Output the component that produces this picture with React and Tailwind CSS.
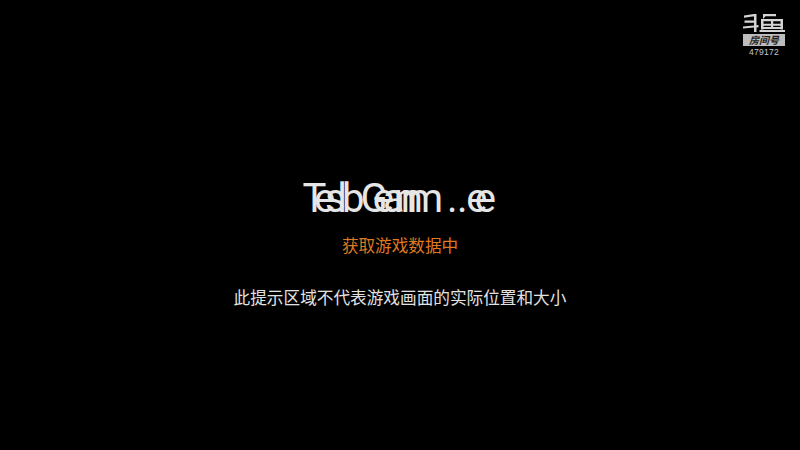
const cjk = { fontFamily: '"Noto Sans CJK SC", sans-serif' }

function Logo() {
  return (
    <div className="flex w-[42px] flex-col items-center">
      <svg viewBox="0 0 42 18" className="h-[18px] w-[42px]" fill="#d4d4d4">
        {/* dou */}
        <path d="M1 1.500 11 0v2.200L1 3.700zM1.500 6.500h9.500v2.200H1.500zM0 12.500l11-1V0h2.500v11.200l2-.2v2.200l-2 .2V18H11v-4.600L0 14.500z" />
        {/* yu */}
        <path d="M20 0h13v2.200H22.500L20 5zM18 5h22v10.500h-2.500V7.200H20.500v8.300H18zM28 5.500h2.200v9H28zM19 9.700h20v2H19zM19 13h20v2H19zM16.500 16h25.500v2H16.500z" />
      </svg>
      <div
        className="mt-[2px] flex h-[12px] w-[42px] items-center justify-center bg-[#bdbdbd] text-[10px] font-bold italic leading-none text-[#222]"
        style={cjk}
      >
        房间号
      </div>
      <div className="mt-[1px] font-['Liberation_Sans',sans-serif] text-[8.500px] leading-[10px] tracking-[0.300px] text-[#c8c8c8]">
        479172
      </div>
    </div>
  )
}

export default function App() {
  return (
    <div className="relative flex h-[450px] w-[800px] flex-col items-center overflow-hidden bg-black">
      <div className="absolute right-[15px] top-[14px]">
        <Logo />
      </div>

      {/* the title is two strings drawn on top of each other in the source */}
      <div className="mt-[173px] flex h-[52px] items-center whitespace-nowrap font-['Roboto',sans-serif] text-[40px] leading-none text-[#e6e6e6]">
        <span className="tracking-[-10.300px]">Tes</span>
        <span className="ml-[2px] tracking-[-5px]">l</span>
        <span className="tracking-[-4px]">b</span>
        <span className="tracking-[-15px]">G</span>
        <span className="tracking-[-11px]">ea</span>
        <span className="tracking-[-15px]">nn</span>
        <span>m</span>
        <span className="ml-[4px] tracking-[-0.500px]">..</span>
        <span className="ml-[-1px] pr-[14px] tracking-[-12.500px]">ee</span>
      </div>

      <p className="mt-[9px] text-[16.600px] leading-[22px] text-[#df7a20]" style={cjk}>
        获取游戏数据中
      </p>

      <p className="mt-[30px] text-[16.650px] leading-[22px] text-[#e2e2e2]" style={cjk}>
        此提示区域不代表游戏画面的实际位置和大小
      </p>
    </div>
  )
}
